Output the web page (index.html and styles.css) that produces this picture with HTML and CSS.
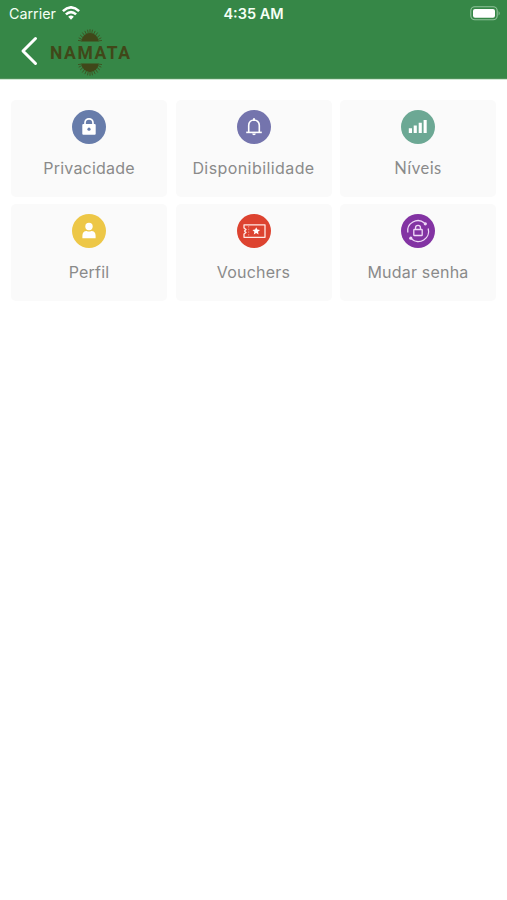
FILE: index.html
```html
<!DOCTYPE html>
<html lang="pt">
<head>
<meta charset="utf-8">
<meta name="viewport" content="width=device-width">
<title>Namata</title>
<link rel="stylesheet" href="styles.css">
</head>
<body>
<header class="header">
  <div class="status">
    <div class="carrier"><span class="carrier-name">Carrier</span>
      <svg class="wifi" viewBox="0 0 18 14" width="18" height="14"><g fill="none" stroke="#fff" stroke-width="2.6"><path d="M.9 5.100Q9-2.400 17.100 5.100"/><path d="M3.900 8.400q5.100-4.600 10.200 0"/></g><path d="M6.200 10.700q2.800-2.400 5.600 0L9 13.700z" fill="#fff"/></svg>
    </div>
    <span class="time">4:35 AM</span>
    <svg class="battery" viewBox="0 0 31 15" width="31" height="15"><rect x=".8" y=".8" width="26.400" height="13" rx="4" fill="none" stroke="#90c39b" stroke-width="1.100"/><rect x="3" y="3" width="22" height="8.800" rx="2" fill="#fff"/><path d="M28.600 5q2.200 2.300 0 4.600z" fill="#90c39b"/></svg>
  </div>
  <nav class="nav">
    <svg class="back" viewBox="0 0 18 30" width="18" height="30"><path d="M15.500 2.500L3 15l12.500 12.500" fill="none" stroke="#fff" stroke-width="3" stroke-linecap="round" stroke-linejoin="round"/></svg>
    <div class="logo">
      <svg class="sun" viewBox="0 0 26 13" width="26" height="13"><path d="M4.500 12.500a8.500 8.500 0 0 1 17 0z"/><path class="rays" d="M5 12L1 11.400M5 10.500L1.700 8.800M6 8.600L3.200 6M7.500 6.500L5.300 3.500M9.500 5.500L7.800 1.900M11.300 4.500L10.500.7M13 4.500V.2M14.700 4.500L15.500.7M16.500 5.500L18.200 1.900M18.500 6.500L20.700 3.500M20 8.600L22.800 6M21 10.500L24.300 8.800M21 12L25 11.400"/></svg>
      <span class="wordmark">NAMATA</span>
      <svg class="sun flipped" viewBox="0 0 26 13" width="26" height="13"><path d="M4.500 12.500a8.500 8.500 0 0 1 17 0z"/><path class="rays" d="M5 12L1 11.400M5 10.500L1.700 8.800M6 8.600L3.200 6M7.500 6.500L5.300 3.500M9.500 5.500L7.800 1.900M11.300 4.500L10.500.7M13 4.500V.2M14.700 4.500L15.500.7M16.500 5.500L18.200 1.900M18.500 6.500L20.700 3.500M20 8.600L22.800 6M21 10.500L24.300 8.800M21 12L25 11.400"/></svg>
    </div>
  </nav>
</header>
<main class="grid">
  <a class="card"><svg class="icon" viewBox="0 0 34 34"><circle cx="17" cy="17" r="17" fill="#677caa"/><path d="M13 15v-2.200a4 4 0 0 1 8 0V15" fill="none" stroke="#fff" stroke-width="1.700"/><rect x="10.300" y="14" width="13.400" height="10.700" rx="1" fill="#fff"/><circle cx="17" cy="19.200" r="1.600" fill="#677caa"/></svg><span class="label privacy">Privacidade</span></a>
  <a class="card"><svg class="icon" viewBox="0 0 34 34"><circle cx="17" cy="17" r="17" fill="#7474ad"/><g fill="none" stroke="#fff" stroke-width="1.600"><path d="M11.700 22v-6.500c0-7.400 10.600-7.400 10.600 0V22"/><path d="M9.200 22.400h15.600"/></g><path d="M16 8.300h2V11h-2zM15.200 23.500h3.600a1.800 1.800 0 0 1-3.600 0z" fill="#fff"/></svg><span class="label availability">Disponibilidade</span></a>
  <a class="card"><svg class="icon" viewBox="0 0 34 34"><circle cx="17" cy="17" r="17" fill="#6ca894"/><path d="M7.800 18.200H11V23H7.800zM12.700 15.500h3.100V23h-3.100zM17.700 12.700h3.100V23h-3.100zM22.600 10h3.100v13h-3.100z" fill="#fff"/></svg><span class="label levels">Níveis</span></a>
  <a class="card"><svg class="icon" viewBox="0 0 34 34"><circle cx="17" cy="17" r="17" fill="#edc747"/><circle cx="17" cy="12.500" r="3.700" fill="#fff"/><path d="M10.400 24.200v-2.500q0-4.500 4.300-4.700q2.300 1 4.600 0q4.300.2 4.300 4.700v2.500z" fill="#fff"/></svg><span class="label profile">Perfil</span></a>
  <a class="card"><svg class="icon" viewBox="0 0 34 34"><circle cx="17" cy="17" r="17" fill="#dd4330"/><path d="M7 10.800h21v12.500H7v-3.300l2-1.500-1.500-1.500 1.500-1.500-2-1.500z" fill="none" stroke="#ffe9e4" stroke-width="1.300" stroke-linejoin="round"/><path d="M11.700 12v10.500" stroke="#f4a398" stroke-width=".8" stroke-dasharray="1.500 1.200"/><path d="M19.200 13.200l1.100 2.400 2.700.3-2 1.800.6 2.700-2.400-1.400-2.400 1.400.6-2.700-2-1.800 2.700-.3z" fill="#fff"/></svg><span class="label vouchers">Vouchers</span></a>
  <a class="card"><svg class="icon" viewBox="0 0 34 34"><circle cx="17" cy="17" r="17" fill="#8333a3"/><g fill="none" stroke="#efd9f7" stroke-width="1.300"><path d="M6.800 18.500A10.300 10.300 0 0 1 23.500 9M27.200 14.500A10.300 10.300 0 0 1 10.500 25"/><rect x="12.800" y="15.500" width="8.400" height="6" rx=".6"/><path d="M14.500 15.500v-1.600a2.500 2.500 0 0 1 5 0v1.600"/></g><g fill="#efd9f7"><circle cx="24.300" cy="9.800" r="1.600"/><circle cx="9.800" cy="24.200" r="1.600"/></g></svg><span class="label password">Mudar senha</span></a>
</main>
</body>
</html>
```
FILE: styles.css
```css
body { margin: 0; background: #fff; font-family: "Inter", sans-serif; }
.header { height: 79px; background: #368747; box-sizing: border-box; border-bottom: 1px solid #50915b; box-shadow: 0 1px 0 #cfe8d3; }
.status { height: 26px; display: grid; grid-template-columns: 1fr auto 1fr; align-items: center; padding: 0 6px 0 9px; color: #f5fff5; }
.carrier { display: flex; align-items: center; gap: 6px; font-size: 14.3px; }
.time { font-size: 14.5px; font-weight: 600; margin-right: 3px; }
.battery { justify-self: end; }
.nav { display: flex; align-items: center; height: 52px; padding: 0 0 0 20px; gap: 12px; }
.back { margin-top: -2px; }
.logo { width: 80px; height: 47px; display: flex; flex-direction: column; align-items: center; justify-content: space-between; margin-top: 1px; }
.sun { fill: #404719; flex: none; }
.rays { stroke: #404719; stroke-width: .8; }
.flipped { transform: scaleY(-1); }
.wordmark { font: 700 17.5px/18px "Roboto", sans-serif; letter-spacing: 1.6px; margin-right: -1.6px; color: #404719; }
.grid { display: grid; grid-template-columns: repeat(3, 156px); grid-auto-rows: 97px; gap: 7px 8.5px; padding: 21px 0 0 11px; }
.card { background: #fafafa; border-radius: 5px; display: flex; flex-direction: column; align-items: center; padding-top: 10px; box-sizing: border-box; }
.icon { width: 34px; height: 34px; flex: none; }
.label { margin-top: 14px; font-size: 16px; line-height: 20px; color: #8a8a8a; letter-spacing: .2px; white-space: nowrap; }
.availability { letter-spacing: .42px; }
.levels { font-family: "Lato", sans-serif; font-size: 16.5px; letter-spacing: .5px; }
```
